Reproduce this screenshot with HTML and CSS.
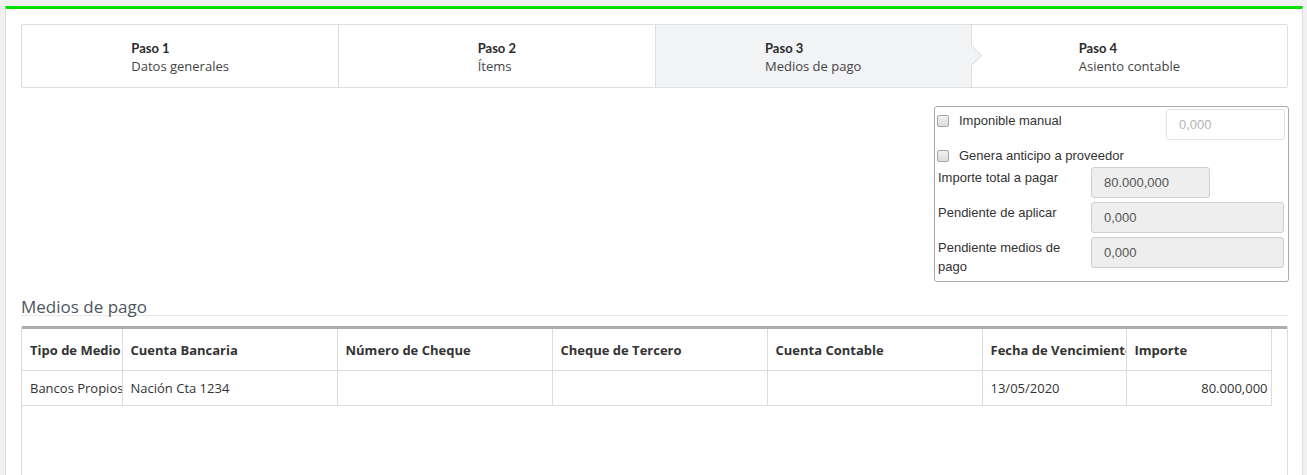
FILE: index.html
```html
<!DOCTYPE html>
<html lang="es">
<head>
<meta charset="utf-8">
<title>Medios de pago</title>
<link rel="stylesheet" href="styles.css">
</head>
<body>
<div class="panel">
  <div class="wizard">
    <div class="step"><div class="step-text"><div class="step-title">Paso 1</div><div class="step-name">Datos generales</div></div></div>
    <div class="step"><div class="step-text"><div class="step-title">Paso 2</div><div class="step-name">Ítems</div></div></div>
    <div class="step active"><div class="step-text"><div class="step-title">Paso 3</div><div class="step-name">Medios de pago</div></div></div>
    <div class="step"><div class="step-text"><div class="step-title">Paso 4</div><div class="step-name">Asiento contable</div></div></div>
  </div>

  <div class="summary-row">
    <div class="summary">
      <div class="srow srow-first">
        <label class="check"><input type="checkbox" class="cb"><span>Imponible manual</span></label>
        <input class="field field-sm" type="text" placeholder="0,000">
      </div>
      <div class="srow srow-second">
        <label class="check"><input type="checkbox" class="cb"><span>Genera anticipo a proveedor</span></label>
      </div>
      <div class="frow">
        <div class="flabel">Importe total a pagar</div>
        <div><input class="field field-sm ro" type="text" value="80.000,000" readonly></div>
      </div>
      <div class="frow">
        <div class="flabel">Pendiente de aplicar</div>
        <div><input class="field ro" type="text" value="0,000" readonly></div>
      </div>
      <div class="frow">
        <div class="flabel">Pendiente medios de pago</div>
        <div><input class="field ro" type="text" value="0,000" readonly></div>
      </div>
    </div>
  </div>

  <h3 class="section-title">Medios de pago</h3>

  <div class="grid-wrap">
    <table class="grid">
      <colgroup>
        <col class="c1"><col class="c2"><col class="c2"><col class="c2"><col class="c2"><col class="c6"><col class="c7">
      </colgroup>
      <thead>
        <tr>
          <th>Tipo de Medio</th>
          <th>Cuenta Bancaria</th>
          <th>Número de Cheque</th>
          <th>Cheque de Tercero</th>
          <th>Cuenta Contable</th>
          <th>Fecha de Vencimiento</th>
          <th>Importe</th>
        </tr>
      </thead>
      <tbody>
        <tr>
          <td>Bancos Propios</td>
          <td>Nación Cta 1234</td>
          <td></td>
          <td></td>
          <td></td>
          <td>13/05/2020</td>
          <td class="num">80.000,000</td>
        </tr>
      </tbody>
    </table>
  </div>
</div>
</body>
</html>
```

FILE: styles.css
```css
html, body {
  margin: 0;
  padding: 0;
}
body {
  background: #f1f1f1;
  font-family: "Open Sans", "Liberation Sans", sans-serif;
  color: #333;
  overflow: hidden;
}
.panel {
  box-sizing: border-box;
  margin: 6px 0 0 5px;
  width: 1298px;
  min-height: 520px;
  background: #fff;
  border-top: 3px solid #00df00;
  border-left: 1px solid #dcdcdc;
  border-right: 1px solid #dcdcdc;
  padding: 15px 14px 0 15px;
}

/* Wizard */
.wizard {
  display: grid;
  grid-template-columns: repeat(4, 1fr);
  height: 64px;
  box-sizing: border-box;
  border: 1px solid #dedede;
  border-radius: 2px;
}
.step {
  position: relative;
  display: flex;
  align-items: center;
  justify-content: center;
  border-left: 1px solid #dedede;
}
.step:first-child {
  border-left: none;
}
.step.active {
  background: #f2f3f5;
}
.step.active::after {
  content: "";
  position: absolute;
  right: -8px;
  top: 50%;
  width: 14px;
  height: 14px;
  margin-top: -8px;
  background: #f2f3f5;
  border-top: 1px solid #dedede;
  border-right: 1px solid #dedede;
  transform: rotate(45deg);
  z-index: 2;
}
.step-text {
  font-size: 13px;
  line-height: 18px;
  padding-top: 2px;
}
.step-title {
  font-family: Lato, "Open Sans", sans-serif;
  font-weight: 700;
  color: #2b2b2b;
}
.step-name {
  color: #444;
}

/* Summary box */
.summary-row {
  display: flex;
  justify-content: flex-end;
  margin-top: 18px;
  margin-right: -1px;
}
.summary {
  box-sizing: border-box;
  width: 355px;
  border: 1px solid #a9a9a9;
  border-radius: 3px;
  padding: 2px 3px 5px 3px;
  font-family: "Liberation Sans", Arial, sans-serif;
  font-size: 13px;
  line-height: 19px;
  color: #333;
}
.srow {
  display: flex;
  justify-content: space-between;
  align-items: flex-start;
}
.srow-first .check {
  margin-top: 2px;
}
.srow-second {
  margin-top: 6px;
  margin-bottom: 2px;
}
.check {
  display: flex;
  align-items: center;
  gap: 10px;
  margin-left: -1px;
}
.cb {
  -webkit-appearance: none;
  appearance: none;
  margin: 0;
  width: 12px;
  height: 12px;
  border: 1px solid #a6a6a6;
  border-radius: 2px;
  background: linear-gradient(#f0f0f0, #dcdcdc);
}
.frow {
  display: grid;
  grid-template-columns: 153px 1fr;
  margin-bottom: 4px;
}
.frow:last-child {
  margin-bottom: 0;
}
.flabel {
  padding-top: 1px;
  padding-right: 30px;
}
.field {
  box-sizing: border-box;
  display: block;
  width: 193px;
  height: 31px;
  margin: 0;
  padding: 0 12px;
  border: 1px solid #e2e2e2;
  border-radius: 3px;
  background: #fff;
  font-family: "Liberation Sans", Arial, sans-serif;
  font-size: 13px;
  color: #555;
  outline: none;
}
.field-sm {
  width: 119px;
}
.field::placeholder {
  color: #b5b5b5;
}
.field.ro {
  background: #eee;
  border-color: #cfcfcf;
}

/* Section */
.section-title {
  margin: 16px 0 10px 0;
  font-family: "Open Sans", sans-serif;
  font-weight: 400;
  font-size: 17px;
  line-height: 17px;
  color: #4d5660;
  border-bottom: 1px solid #e8e8e8;
}

/* Grid */
.grid-wrap {
  border-top: 3px solid #adadad;
  border-left: 1px solid #dcdcdc;
  border-right: 1px solid #dcdcdc;
  min-height: 200px;
  border-radius: 2px 2px 0 0;
}
.grid {
  table-layout: fixed;
  border-collapse: collapse;
  width: 1249px;
  font-size: 13px;
  color: #333;
}
.c1 { width: 100px; }
.c2 { width: 215px; }
.c6 { width: 144px; }
.c7 { width: 145px; }
.grid th, .grid td {
  border: 1px solid #dcdcdc;
  padding: 0 3px 0 8px;
  text-align: left;
  white-space: nowrap;
  overflow: hidden;
  text-overflow: clip;
  vertical-align: middle;
}
.grid th {
  height: 41px;
  font-weight: 700;
  border-top: none;
}
.grid td {
  height: 34px;
}
.grid th:first-child, .grid td:first-child {
  border-left: none;
}
.grid td.num {
  text-align: right;
}
```
